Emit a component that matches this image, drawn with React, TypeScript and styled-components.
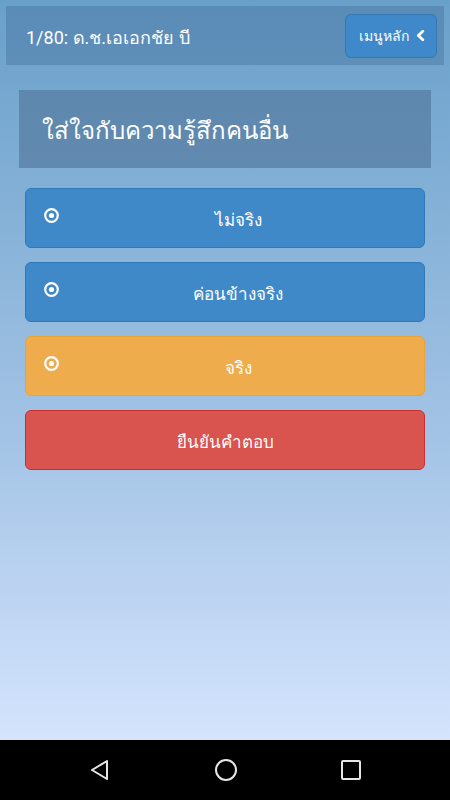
import React, { useState } from 'react';
import { styled, createGlobalStyle } from 'styled-components';

const GlobalStyle = createGlobalStyle`
  html, body {
    margin: 0;
    padding: 0;
    height: 100%;
  }
  body {
    font-family: Roboto, "Noto Sans", "DejaVu Sans", sans-serif;
  }
  #root {
    height: 100%;
  }
`;

const Screen = styled.div`
  width: 450px;
  height: 800px;
  display: flex;
  flex-direction: column;
  overflow: hidden;
`;

const Content = styled.div`
  flex: 1;
  background: linear-gradient(to bottom, #69a0ca 0%, #a4c4e6 60%, #d4e4fd 100%);
  padding: 6px 6px 0;
  display: flex;
  flex-direction: column;
`;

const TopBar = styled.div`
  height: 59px;
  background: rgba(70, 115, 160, 0.45);
  display: flex;
  align-items: center;
  justify-content: space-between;
  padding: 0 7px 0 20px;
  box-sizing: border-box;
`;

const Progress = styled.div`
  color: #ffffff;
  font-size: 18px;
  padding-top: 4px;
`;

const MenuButton = styled.button`
  height: 44px;
  width: 92px;
  background: #3f88c9;
  border: 1px solid #3478b5;
  border-radius: 6px;
  color: #ffffff;
  font-family: inherit;
  font-size: 14px;
  display: flex;
  align-items: center;
  justify-content: center;
  gap: 7px;
  padding: 0 0 0 2px;
  cursor: pointer;

  svg {
    display: block;
  }
`;

const Title = styled.div`
  margin: 25px 13px 0;
  height: 78px;
  background: rgba(75, 110, 145, 0.55);
  color: #ffffff;
  font-size: 24px;
  display: flex;
  align-items: center;
  padding: 2px 0 0 23px;
  box-sizing: border-box;
`;

const Choices = styled.div`
  margin: 20px 19px 0;
  display: flex;
  flex-direction: column;
  gap: 14px;
`;

const tones = {
  blue: { bg: '#3f89c9', border: '#2f78b9' },
  orange: { bg: '#eeac4d', border: '#eca236' },
  red: { bg: '#d9534f', border: '#c9302c' },
};

const ChoiceButton = styled.button<{ $tone: keyof typeof tones }>`
  height: 60px;
  width: 100%;
  box-sizing: border-box;
  background: ${p => tones[p.$tone].bg};
  border: 1px solid ${p => tones[p.$tone].border};
  border-radius: 6px;
  color: #ffffff;
  font-family: inherit;
  font-size: 17px;
  display: flex;
  align-items: center;
  padding: 0 7px 0 18px;
  cursor: pointer;
`;

const RadioMark = styled.span`
  width: 15px;
  height: 15px;
  flex: none;
  margin-top: -6px;
  display: flex;

  svg {
    display: block;
  }
`;

const ChoiceLabel = styled.span<{ $full?: boolean }>`
  flex: 1;
  text-align: center;
  padding-top: 2px;
  margin-left: ${p => (p.$full ? '-11px' : '0')};
`;

const NavBar = styled.div`
  height: 60px;
  background: #000000;
  display: flex;
  align-items: center;
  justify-content: space-between;
  padding: 0 87px 0 88px;
  flex: none;

  svg {
    display: block;
  }
`;

const Radio = () => (
  <svg width="15" height="15" viewBox="0 0 15 15">
    <circle cx="7.5" cy="7.5" r="6.3" fill="none" stroke="#ffffff" strokeWidth="2.2" />
    <circle cx="7.5" cy="7.5" r="2.6" fill="#ffffff" />
  </svg>
);

const Chevron = () => (
  <svg width="9" height="11" viewBox="0 0 9 11">
    <polyline
      points="6.8,1.3 2.3,5.5 6.8,9.7"
      fill="none"
      stroke="#ffffff"
      strokeWidth="2.8"
      strokeLinecap="round"
      strokeLinejoin="round"
    />
  </svg>
);

const options = ['ไม่จริง', 'ค่อนข้างจริง', 'จริง'];

export default function App() {
  const [selected, setSelected] = useState(2);

  return (
    <Screen>
      <GlobalStyle />
      <Content>
        <TopBar>
          <Progress>1/80: ด.ช.เอเอกชัย บี</Progress>
          <MenuButton>
            เมนูหลัก <Chevron />
          </MenuButton>
        </TopBar>
        <Title>ใส่ใจกับความรู้สึกคนอื่น</Title>
        <Choices>
          {options.map((opt, i) => (
            <ChoiceButton
              key={opt}
              $tone={selected === i ? 'orange' : 'blue'}
              onClick={() => setSelected(i)}
            >
              <RadioMark>
                <Radio />
              </RadioMark>
              <ChoiceLabel>{opt}</ChoiceLabel>
            </ChoiceButton>
          ))}
          <ChoiceButton $tone="red">
            <ChoiceLabel $full>ยืนยันคำตอบ</ChoiceLabel>
          </ChoiceButton>
        </Choices>
      </Content>
      <NavBar>
        <svg width="24" height="24" viewBox="0 0 24 24">
          <path d="M19 3 L4 12 L19 21 Z" fill="none" stroke="#e6e6e6" strokeWidth="2" strokeLinejoin="round" />
        </svg>
        <svg width="24" height="24" viewBox="0 0 24 24">
          <circle cx="12" cy="12" r="10" fill="none" stroke="#e6e6e6" strokeWidth="2" />
        </svg>
        <svg width="24" height="24" viewBox="0 0 24 24">
          <rect x="3" y="3" width="18" height="18" rx="1" fill="none" stroke="#e6e6e6" strokeWidth="2" />
        </svg>
      </NavBar>
    </Screen>
  );
}
